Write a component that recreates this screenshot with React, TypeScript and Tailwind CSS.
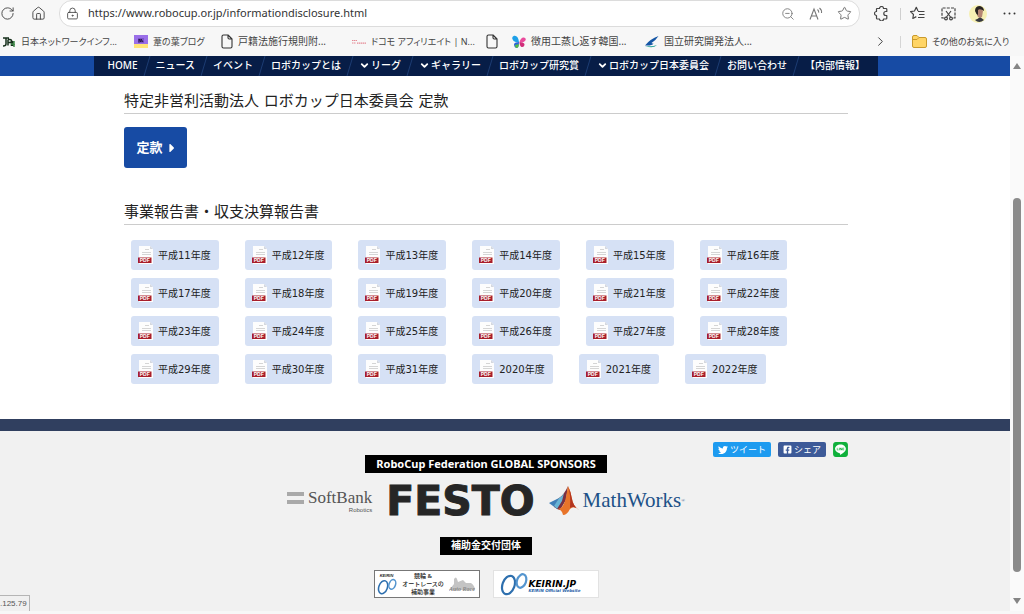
import type { ReactNode } from 'react'
import { ChevronDown, ChevronRight, House, LockKeyhole, RotateCw, Star, ZoomOut } from 'lucide-react'
import { FaTwitter, FaFacebookSquare, FaLine, FaCaretRight } from 'react-icons/fa'

interface Bookmark {
  label: string
  icon: ReactNode
  className: string
}

interface NavItem {
  label: string
  dropdown?: boolean
}

const navItems: NavItem[] = [
  { label: 'HOME' },
  { label: 'ニュース' },
  { label: 'イベント' },
  { label: 'ロボカップとは' },
  { label: 'リーグ', dropdown: true },
  { label: 'ギャラリー', dropdown: true },
  { label: 'ロボカップ研究賞' },
  { label: 'ロボカップ日本委員会', dropdown: true },
  { label: 'お問い合わせ' },
  { label: '【内部情報】' },
]

// Heisei 11 to 31, then the western calendar
const reports = [
  ...Array.from({ length: 21 }, (_, i) => `平成${i + 11}年度`),
  '2020年度',
  '2021年度',
  '2022年度',
]

function PageIcon() {
  return (
    <svg width="12" height="15" viewBox="0 0 12 15" fill="none" stroke="#333" strokeWidth="1.1" strokeLinejoin="round">
      <path d="M1 2.5Q1 1 2.5 1H7l4 4v7.5q0 1.5-1.500 1.500h-7Q1 14 1 12.500ZM7 1v2.800Q7 5 8.200 5H11" />
    </svg>
  )
}

// Labels made mostly of kana take the smaller size
const bookmarks: Bookmark[] = [
  {
    label: '日本ネットワークインフ...',
    className: 'w-[132px] text-[9px]',
    icon: (
      <svg width="14" height="12" viewBox="0 0 14 12" fill="none" stroke="#17301c" strokeWidth="1.500">
        <path d="M1 2h6M4 2v6q0 2-3 2M6 3.500v6M6 3.500h2q1.500 0 1.500 1.500T8 6.500H6M9.500 4v6M11 5v5" />
        <path d="M11 6h2M9 8h4M12 8v3" stroke="#3f8a4a" />
      </svg>
    ),
  },
  {
    label: '葦の葉ブログ',
    className: 'w-[87px] text-[9px]',
    icon: (
      <svg width="14" height="13" viewBox="0 0 14 13">
        <path d="M0 0h14v9H0z" fill="#9a6fe8" />
        <path d="M0 9h14v4H0z" fill="#ffe477" />
        <path d="M4 3h6v5H4z" fill="#7d55c9" />
        <path d="M5 7.500V4l2 3V4l2 3" stroke="#241348" fill="none" />
      </svg>
    ),
  },
  { label: '戸籍法施行規則附...', className: 'w-[131px] text-[10px]', icon: <PageIcon /> },
  {
    label: 'ドコモ アフィリエイト | N...',
    className: 'w-[134px] text-[9px]',
    icon: (
      <svg width="14" height="6" viewBox="0 0 14 6" stroke="#e58a95" strokeWidth="1.200">
        <path d="M0 1.500h5M0 4h4M5 4.200h9" strokeDasharray="1.500 .5" />
      </svg>
    ),
  },
  { label: '', className: 'w-[26px]', icon: <PageIcon /> },
  {
    label: '徴用工蒸し返す韓国...',
    className: 'w-[133px] text-[10px]',
    icon: (
      <svg width="14" height="14" viewBox="0 0 14 14">
        <path d="M7 7Q6 0 2 .8-1 2 1 5q1 2.500 6 2z" fill="#1ea0e8" />
        <path d="M7 7Q3 7 2 9q0 4 3 4 2-1 2-6z" fill="#2b64d8" />
        <path d="M7.500 7Q9 2 12 2.500q3 1 1 3.500-2 2-5.500 1z" fill="#ea4a9c" />
        <path d="M7.500 7q4 0 5 2 0 3.500-3 3-2-1-2-5z" fill="#d12d7a" />
        <path d="M3 10q0 3 2 3 2-1 2-4z" fill="#54b948" />
      </svg>
    ),
  },
  {
    label: '国立研究開発法人...',
    className: 'w-[130px] text-[10px]',
    icon: (
      <svg width="14" height="12" viewBox="0 0 14 12">
        <path d="M13.500 0Q5 3 0 9.500q7 .5 8.500-2-1.500 0-2-.500Q11 4 13.500 0z" fill="#1556a5" />
        <path d="M0 10q7 1 12-1-4 4-12 1z" fill="#2ba59b" />
      </svg>
    ),
  },
]

function Toolbar() {
  return (
    <div className="flex h-[27px] items-center text-[#444]">
      <button aria-label="更新" className="flex w-[23px]">
        <RotateCw size={15} strokeWidth={1.5} />
      </button>
      <button aria-label="ホーム" className="flex w-9 pl-2">
        <House size={15} strokeWidth={1.5} />
      </button>
      <div className="flex h-full min-w-0 flex-1 items-center rounded-[13px] border border-[#dcdcdc] bg-white pl-[6px] pr-[7px]">
        <LockKeyhole size={13} strokeWidth={1.6} />
        <input
          aria-label="アドレス"
          defaultValue="https://www.robocup.or.jp/informationdisclosure.html"
          className="ml-[9px] min-w-0 flex-1 bg-transparent font-['Noto_Sans','Noto_Sans_CJK_JP',sans-serif] text-[11px] text-[#333] outline-none"
        />
        <div className="flex items-center gap-[14px] text-[#777]">
          <button aria-label="縮小">
            <ZoomOut size={14} strokeWidth={1.5} />
          </button>
          <button aria-label="音声で読み上げる">
            <svg width="14" height="14" viewBox="0 0 14 14" fill="none" stroke="currentColor" strokeWidth="1.100">
              <path d="M1 12.500 5 2l4 10.500M2.500 9h5M8.500 2.500q1.500 1.200 1.200 3.200M10.500 1q2.500 2 2 5" />
            </svg>
          </button>
          <button aria-label="お気に入りに追加">
            <Star size={15} strokeWidth={1.6} />
          </button>
        </div>
      </div>
      <div className="flex w-[164px] items-center pl-[14px]">
        <button aria-label="拡張機能">
          <svg width="15" height="15" viewBox="0 0 15 15" fill="none" stroke="currentColor" strokeWidth="1.200" strokeLinejoin="round">
            <path d="M3 2.500h2.500a2 2 0 0 1 4 0H12q.8 0 .8.8V5.500h-1a2 2 0 0 0 0 4h1v2.700q0 .8-.8.8H9.500a2 2 0 0 1-4 0H3.300q-.8 0-.8-.8V9.500a2 2 0 0 1 0-4V3q0-.5.500-.5z" />
          </svg>
        </button>
        <span className="ml-[11px] h-3 w-px bg-[#cfcfcf]" />
        <button aria-label="お気に入り" className="ml-[9px]">
          <svg width="15" height="15" viewBox="0 0 15 15" fill="none" stroke="currentColor" strokeWidth="1.200" strokeLinejoin="round">
            <path d="M8 5 6.300 1.300 4.500 5l-4 .6 3 2.900-.7 4 3.500-1.900M8 5.500h6.500M9 8.500h5.500M8 11.500h6.500" />
          </svg>
        </button>
        <button aria-label="スクリーンショット" className="ml-4">
          <svg width="15" height="14" viewBox="0 0 15 14" fill="none" stroke="currentColor" strokeWidth="1.200">
            <path d="M3 11H1V1h13v10h-2" strokeDasharray="3 1.200" />
            <path d="M5 4l4.500 6M10 4l-4.500 6" />
            <circle cx="5" cy="11.500" r="1.400" />
            <circle cx="10" cy="11.500" r="1.400" />
          </svg>
        </button>
        <button aria-label="プロファイル" className="ml-[13px]">
          <svg width="18" height="18" viewBox="0 0 18 18">
            <circle cx="9" cy="9" r="9" fill="#f6f0b4" />
            <path d="M6 15q3-1 5-3l4 3q-5 4-9 0z" fill="#36383f" />
            <path d="M7 4q5-2 7 2l-1 6q-4 2-5-2z" fill="#b58673" />
            <path d="M6 6q0-5 5-5 4 1 4 5-4-3-6-1l0 5q-2-1-3-4z" fill="#2a2422" />
          </svg>
        </button>
        <button aria-label="設定など" className="ml-4">
          <svg width="13" height="3" viewBox="0 0 13 3" fill="#333">
            <circle cx="1.500" cy="1.500" r="1" />
            <circle cx="6.500" cy="1.500" r="1" />
            <circle cx="11.500" cy="1.500" r="1" />
          </svg>
        </button>
      </div>
    </div>
  )
}

function BookmarkBar() {
  return (
    <div className="flex h-[29px] items-center whitespace-nowrap pl-0.5 text-[#444] [font-feature-settings:'palt']">
      {bookmarks.map((b, i) => (
        <a key={i} href="#" aria-label={b.label || '新しいページ'} className={`flex shrink-0 items-center gap-[5px] ${b.className}`}>
          {b.icon}
          {b.label}
        </a>
      ))}
      <button aria-label="その他のブックマーク" className="ml-auto">
        <ChevronRight size={15} strokeWidth={1.6} />
      </button>
      <span className="ml-3 h-3 w-px bg-[#d5d5d5]" />
      <a href="#" className="ml-[11px] flex w-[112px] items-center gap-[5px] text-[9px]">
        <svg width="15" height="13" viewBox="0 0 15 13" stroke="#c99a2c">
          <path d="M.5 2q0-1.500 1.500-1.500h3L7 2.500h6q1.500 0 1.500 1.500v7q0 1.500-1.500 1.500H2Q.5 12.500.5 11z" fill="#ffd566" />
          <path d="M.5 4.500H5l2-2" fill="none" />
        </svg>
        その他のお気に入り
      </a>
    </div>
  )
}

function SiteNav() {
  return (
    <div className="bg-[#174ba4] pr-[39px]">
      <nav className="mx-auto flex h-5 max-w-[784px] whitespace-nowrap bg-[#071d47] pl-[5px] text-[10px] font-medium text-white">
        {navItems.map((item, i) => (
          <a key={item.label} href="#" className="flex h-5 items-center">
            {i > 0 && (
              <svg width="8" height="20" viewBox="0 0 8 20" className="-mr-1 -ml-1" stroke="#1d3c73">
                <path d="M7 0 1 20" />
              </svg>
            )}
            <span className="flex items-center gap-px px-[9px] pb-0.5">
              {item.dropdown && <ChevronDown size={11} strokeWidth={4} />}
              {item.label}
            </span>
          </a>
        ))}
      </nav>
    </div>
  )
}

function PdfIcon() {
  return (
    <svg width="16" height="18" viewBox="0 0 16 18" className="shrink-0">
      <path d="M1 0h11l3 3v15H1z" fill="#fdfdfd" />
      <path d="M12 0v3h3z" fill="#d4d8df" />
      <path d="M7 3.500h4M4 6.500h9M4 8.500h9" stroke="#d5d5d5" />
      <path d="M0 11.500h13.500v5.500H0z" fill="#a81e2b" />
      <text x="6.750" y="16" textAnchor="middle" fontSize="5" fontWeight="700" fill="#fff" fontFamily="Liberation Sans, sans-serif">
        PDF
      </text>
    </svg>
  )
}

function SectionTitle({ children }: { children: ReactNode }) {
  return (
    <h2 className="h-6 border-b border-[#ccc] font-['DejaVu_Sans','Noto_Sans_CJK_JP',sans-serif] text-[15px] leading-[23px] text-[#222]">
      {children}
    </h2>
  )
}

function Sponsors() {
  return (
    <div className="mt-3 flex h-8 items-center justify-center whitespace-nowrap">
      <a href="#" className="flex items-start gap-1">
        <svg width="17" height="20" viewBox="0 0 17 20" fill="#a9a9a9">
          <path d="M0 3h17v4H0zM0 11h17v4H0z" />
        </svg>
        <span className="flex flex-col items-end font-['Liberation_Serif',serif] text-[17px] leading-[18px] text-[#555]">
          SoftBank
          <span className="font-['Liberation_Sans',sans-serif] text-[6px] leading-[6px]">Robotics</span>
        </span>
      </a>
      <a
        href="#"
        className="ml-[14px] font-['DejaVu_Sans',sans-serif] text-[41px] font-bold leading-8 text-[#262626] [-webkit-text-stroke:1px_#262626]"
      >
        FESTO
      </a>
      <a href="#" className="ml-[14px] flex items-center gap-1 font-['Liberation_Serif',serif] text-[21px] text-[#1d5288]">
        <svg width="30" height="30" viewBox="0 0 30 30">
          <path d="M0 17 10 12l4 5-6 6z" fill="#3f7fb8" />
          <path d="M10 12q5-3 9-12l-2 14-6 10-3-1q-2-2-3-2z" fill="#7a3042" />
          <path d="M10 12q3-1 5-5l-2 8-5 8-3-3z" fill="#67b4d6" />
          <path d="M19 0q3 6 4 13t7 11q-5-5-9-1-3 6-7 6-1-5-5-6 6-1 8-12z" fill="#e8742a" />
          <path d="M19 0q3 6 4 13t7 11q-5-5-9-2Q22 8 19 0z" fill="#b3341f" />
        </svg>
        <span className="flex items-center">
          MathWorks
          <span className="text-[5px]">®</span>
        </span>
      </a>
    </div>
  )
}

function Rings({ className }: { className: string }) {
  return (
    <svg viewBox="0 0 28 24" className={className} fill="none" strokeWidth="2.200">
      <ellipse cx="8.500" cy="13" rx="6" ry="9.500" transform="rotate(20 8.500 13)" stroke="#2d6fae" />
      <ellipse cx="21.500" cy="9" rx="4.500" ry="7" transform="rotate(20 21.500 9)" stroke="#5495cf" />
    </svg>
  )
}

function Grants() {
  return (
    <div className="mt-[15px] flex justify-center gap-[13px]">
      <a href="#" className="flex h-7 w-[106px] items-center justify-between border border-[#777] bg-white px-0.5">
        <span className="flex flex-col items-center font-['Liberation_Sans',sans-serif] text-[4px] font-bold italic leading-[4px] text-[#222]">
          KEIRIN
          <Rings className="h-[17px] w-5" />
        </span>
        <span className="text-center text-[6px] font-medium leading-2 text-[#222]">
          競輪 &
          <br />
          オートレースの
          <br />
          補助事業
        </span>
        <svg width="27" height="18" viewBox="0 0 27 18" fill="#c4c4c4">
          <path d="M1 14 5 9V4q2-3 3 0l1 3 5-2 3 3h5q4 3 4 7H0z" />
          <text x="0" y="16" fontSize="6" fontStyle="italic" fontWeight="700" fill="#888" fontFamily="Liberation Serif, serif">
            Auto Race
          </text>
        </svg>
      </a>
      <a href="#" className="flex h-7 w-[106px] items-center gap-px border border-[#e2e2e2] bg-white pl-[6px] font-['DejaVu_Sans',sans-serif] font-bold italic">
        <Rings className="h-6 w-7 shrink-0" />
        <span className="flex flex-col whitespace-nowrap pt-1">
          <span className="text-[9px] leading-2 text-black">KEIRIN.JP</span>
          <span className="text-[4px] leading-[5px] text-[#2b62a8]">KEIRIN Official Website</span>
        </span>
      </a>
    </div>
  )
}

function Footer() {
  return (
    <footer className="flex-1 border-t-[12px] border-[#303f5f] bg-[#f1f1f1] pr-[38px] pt-[11px]">
      <div className="mx-auto flex h-[15px] max-w-[724px] justify-end gap-[7px] text-[9px] text-white">
        <a href="#" className="flex w-[58px] items-center justify-center gap-0.5 whitespace-nowrap rounded-xs bg-[#1d9bf0]">
          <FaTwitter size={10} />
          ツイート
        </a>
        <a href="#" className="flex w-12 items-center justify-center gap-0.5 whitespace-nowrap rounded-xs bg-[#3d5a98]">
          <FaFacebookSquare size={9} />
          シェア
        </a>
        <a href="#" aria-label="LINE" className="flex w-[15px] items-center justify-center rounded-sm bg-white text-[#0fb03b]">
          <FaLine size={17} className="shrink-0" />
        </a>
      </div>
      <div className="-mt-0.5 flex justify-center">
        <h3 className="h-[18px] bg-black px-[11px] font-['Noto_Sans',sans-serif] text-[11px] font-bold leading-[17px] text-white">
          RoboCup Federation GLOBAL SPONSORS
        </h3>
      </div>
      <Sponsors />
      <div className="mt-5 flex justify-center">
        <h3 className="h-[18px] bg-black px-[11px] text-[10px] font-bold leading-[17px] text-white">補助金交付団体</h3>
      </div>
      <Grants />
    </footer>
  )
}

function ScrollBar() {
  return (
    <div className="flex w-[14px] shrink-0 flex-col items-center bg-[#fafafa] py-[7px]">
      <svg width="8" height="6" viewBox="0 0 8 6" fill="#858585">
        <path d="M4 0 8 6H0z" />
      </svg>
      <div className="grow-[128]" />
      <div className="w-2 grow-[372] rounded-full bg-[#8b8b8b]" />
      <div className="grow-[26]" />
      <svg width="8" height="6" viewBox="0 0 8 6" fill="#858585">
        <path d="M0 0h8L4 6z" />
      </svg>
    </div>
  )
}

export default function App() {
  return (
    <div className="relative flex min-h-screen flex-col border-b-[3px] border-[#f7f7f7] bg-[#f7f7f7] font-['Noto_Sans','Noto_Sans_CJK_JP',sans-serif]">
      <Toolbar />
      <BookmarkBar />
      <div className="flex flex-1">
        <div className="flex min-w-0 flex-1 flex-col bg-white">
          <SiteNav />
          <main className="pr-[38px] pt-[14px]">
            <div className="mx-auto max-w-[724px] pb-[35px]">
              <SectionTitle>特定非営利活動法人 ロボカップ日本委員会 定款</SectionTitle>
              <a
                href="#"
                className="mt-[13px] flex h-[41px] w-[63px] items-center justify-center gap-0.5 rounded-[3px] bg-[#174ba4] pl-1 text-[13px] font-bold text-white"
              >
                定款
                <FaCaretRight size={14} />
              </a>
              <div className="mt-[33px]">
                <SectionTitle>事業報告書・収支決算報告書</SectionTitle>
              </div>
              <ul className="mt-[15px] flex flex-wrap gap-x-[26px] gap-y-2 pl-[7px] font-['DejaVu_Sans','Noto_Sans_CJK_JP',sans-serif]">
                {reports.map((label) => (
                  <li key={label}>
                    <a
                      href="#"
                      className="flex h-[30px] items-center gap-1 rounded-[3px] bg-[#d6e1f5] px-2 pl-[7px] text-[10px] text-[#222]"
                    >
                      <PdfIcon />
                      {label}
                    </a>
                  </li>
                ))}
              </ul>
            </div>
          </main>
          <Footer />
        </div>
        <ScrollBar />
      </div>
      {/* Link target shown by the browser */}
      <div className="absolute bottom-0 left-0 h-4 border-r border-t border-[#b5b5b5] bg-[#f0f0f0] pr-0.5 font-['Liberation_Sans',sans-serif] text-[8px] leading-[15px] text-[#555]">
        .125.79
      </div>
    </div>
  )
}
